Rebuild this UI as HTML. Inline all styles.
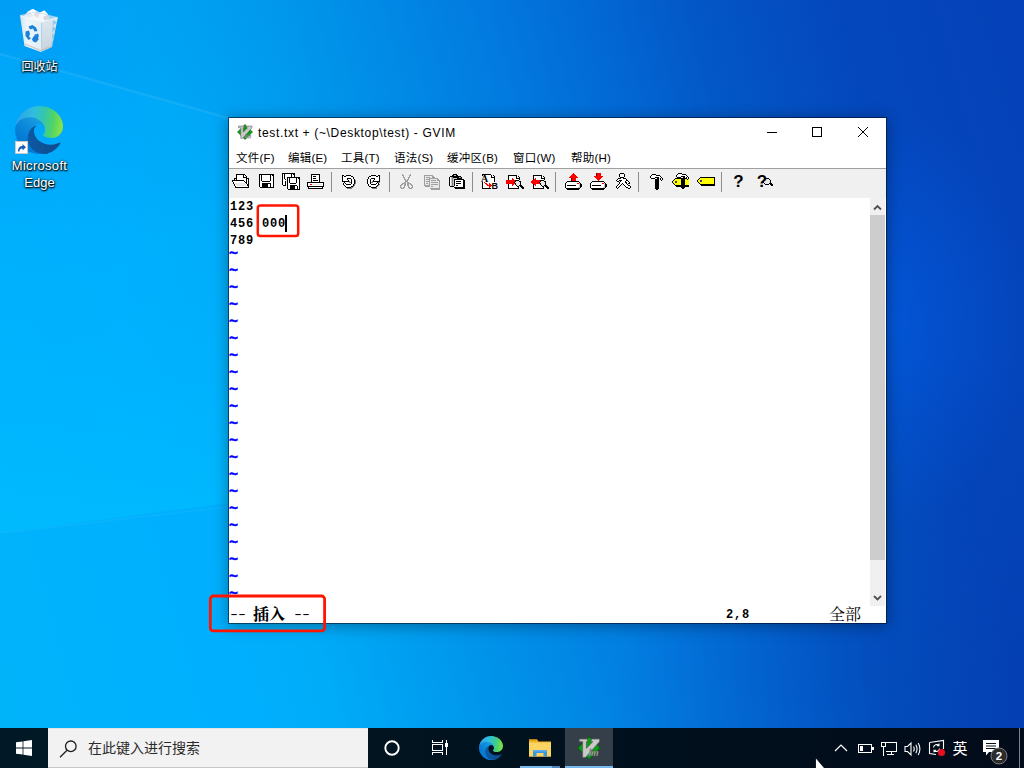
<!DOCTYPE html>
<html lang="zh-CN">
<head>
<meta charset="utf-8">
<title>GVIM</title>
<style>
*{box-sizing:border-box;margin:0;padding:0}
html,body{width:1024px;height:768px;overflow:hidden;background:#0a6fd0}
body{position:relative;font-family:"Liberation Sans","Noto Sans CJK SC",sans-serif;font-size:12px;color:#000}
#desk{position:absolute;left:0;top:0;width:1024px;height:768px;
 background:
  radial-gradient(circle 300px at 0 0, rgba(0,130,230,.40), rgba(0,130,230,0) 100%),
  radial-gradient(circle 420px at 1024px 768px, rgba(4,50,165,.45), rgba(4,50,165,0) 100%),
  radial-gradient(ellipse 150px 210px at 880px 320px, rgba(2,92,228,.65), rgba(2,92,228,0) 100%),
  linear-gradient(75deg,#00b4f9 0%,#00b0ff 20%,#00acf8 28%,#0095eb 41%,#027adf 56%,#0268d4 65%,#0357c6 73%,#0447bc 85%,#0541b8 100%);}
#win{position:absolute;left:228px;top:117px;width:659px;height:507px;background:#fff;background-clip:padding-box;border:1px solid rgba(0,10,30,.55);box-shadow:0 2px 14px rgba(0,0,0,.35)}
#title{position:absolute;left:0;top:0;width:657px;height:30px;background:#fff}
#title .t{position:absolute;left:29px;top:8px;font-size:12px;letter-spacing:.66px;line-height:15px;white-space:nowrap;transform-origin:0 50%}
#menu{position:absolute;left:0;top:30px;width:657px;height:20px;background:#fff}
#menu span{position:absolute;top:2px;line-height:16px;font-size:11.500px;letter-spacing:.2px;white-space:nowrap}
#tb{position:absolute;left:0;top:50px;width:657px;height:30px;background:#f0f0f0;border-top:1px solid #a0a0a0}
#ed{position:absolute;left:0;top:80px;width:657px;height:425px;background:#fff;font-family:"Liberation Mono","Noto Serif CJK SC",monospace;font-weight:bold;font-size:13.33px;line-height:17px;white-space:pre}
#ed .l{position:absolute;left:0;height:17px}
#ed .m{left:.5px;transform:scaleX(.9);transform-origin:0 0;letter-spacing:.89px}
#ed .tl{color:#0000ff;font-size:15px;left:0;-webkit-text-stroke:.5px #00f}
#ed .cj{font-family:"Noto Serif CJK SC",serif;font-size:16px;line-height:17px;display:inline-block;vertical-align:top;height:17px;margin-top:-1px}
#ed .da{display:inline-block;position:relative;left:-1.500px;top:-.5px;font-weight:normal;width:16px;white-space:nowrap;transform:scaleX(1.5);transform-origin:0 50%;letter-spacing:-2.670px}
#sb{position:absolute;left:641px;top:80px;width:15px;height:408px;background:#f0f0f0}
#sb .th{position:absolute;left:0;top:17px;width:15px;height:345px;background:#cdcdcd}
#task{position:absolute;left:0;top:728px;width:1024px;height:40px;background:linear-gradient(90deg,#011926 0%,#01131f 45%,#010f1d 70%,#020b1a 100%)}
#search{position:absolute;left:48px;top:0;width:320px;height:40px;background:#f2f2f2;border-top:1px solid #e4e4e4;border-bottom:1px solid #c8c8c8}
#search .tx{position:absolute;left:40px;top:10px;font-size:14px;line-height:18px;color:#2a2a2a;white-space:nowrap}
#task svg{position:absolute}
.ann{position:absolute;border:2.3px solid #fb1d10;border-radius:4px}
.ico{position:absolute;color:#fff;text-align:center;font-size:12px;line-height:17px;white-space:nowrap;text-shadow:0 1px 2px rgba(0,0,0,.9),0 0 3px rgba(0,0,0,.8),1px 1px 1px rgba(0,0,0,.7)}
.abs{position:absolute}
</style>
</head>
<body>
<div id="desk"></div>
<svg class="abs" style="left:0;top:0" width="1024" height="728" viewBox="0 0 1024 728">
 <defs><linearGradient id="wg" x1="0" y1="120" x2="0" y2="520" gradientUnits="userSpaceOnUse"><stop offset="0" stop-color="#00b0ff" stop-opacity=".3"/><stop offset=".45" stop-color="#00b2ff" stop-opacity=".45"/><stop offset="1" stop-color="#00bcff" stop-opacity=".75"/></linearGradient></defs>
 <path d="M0 54 L228 118 V503 L0 533 Z" fill="url(#wg)"/>
 <path d="M0 54 L228 118" stroke="#5cc8ff" stroke-opacity=".2" stroke-width="2.500" fill="none"/>
 <path d="M0 533 L228 507" stroke="#4fd0ff" stroke-opacity=".13" stroke-width="1.500" fill="none"/>
</svg>

<svg width="0" height="0" style="position:absolute">
 <defs>
  <linearGradient id="eg1" x1="63" y1="0" x2="242" y2="0" gradientUnits="userSpaceOnUse"><stop offset="0" stop-color="#0c59a4"/><stop offset="1" stop-color="#114a8b"/></linearGradient>
  <linearGradient id="eg2" x1="157" y1="100" x2="46" y2="222" gradientUnits="userSpaceOnUse"><stop offset="0" stop-color="#1b9de2"/><stop offset=".16" stop-color="#1595df"/><stop offset=".67" stop-color="#0680d7"/><stop offset="1" stop-color="#0078d4"/></linearGradient>
  <linearGradient id="eg3" x1="10" y1="60" x2="250" y2="90" gradientUnits="userSpaceOnUse"><stop offset="0" stop-color="#2aa3ea"/><stop offset=".35" stop-color="#2fbddf"/><stop offset=".6" stop-color="#35c7a8"/><stop offset=".8" stop-color="#4fd36a"/><stop offset="1" stop-color="#86e247"/></linearGradient>
  <symbol id="edge" viewBox="0 0 256 256">
   <path d="M235.7 195.5a93.7 93.7 0 0 1-10.600 4.700 101.900 101.900 0 0 1-35.900 6.400c-47.300 0-88.500-32.500-88.500-74.300a31.500 31.500 0 0 1 16.400-27.300c-42.800 1.800-53.800 46.400-53.800 72.500 0 73.900 68.100 81.400 82.800 81.400 7.900 0 19.800-2.300 27-4.600l1.300-.4a128.300 128.300 0 0 0 66.600-52.800 4 4 0 0 0-5.300-5.600Z" fill="url(#eg1)"/>
   <path d="M105.700 241.400a79.200 79.200 0 0 1-22.700-21.300 80.700 80.700 0 0 1 29.500-120c3.200-1.500 8.500-4.100 15.600-4a32.400 32.400 0 0 1 25.700 13 31.900 31.900 0 0 1 6.300 18.700c0-.2 24.500-79.600-80-79.600-43.900 0-80 41.600-80 78.200a130.200 130.200 0 0 0 12.100 56 128 128 0 0 0 156.400 67 75.500 75.500 0 0 1-62.800-8Z" fill="url(#eg2)"/>
   <path d="M152.300 148.900c-.9 1-3.300 2.500-3.300 5.700 0 2.600 1.700 5.200 4.800 7.300 14.300 10 41.400 8.600 41.500 8.600a59.600 59.600 0 0 0 30.300-8.300 61.400 61.400 0 0 0 30.400-52.900c.3-22.400-8-37.300-11.300-43.900C223.500 24.100 177.900 0 128 0A128 128 0 0 0 0 126.200c.5-36.500 36.800-66 80-66 3.500 0 23.500.3 42 10a72.600 72.600 0 0 1 30.900 29.300c6.100 10.600 7.200 24.100 7.200 29.500s-2.700 13.300-7.800 19.900Z" fill="url(#eg3)"/>
  </symbol>
  <symbol id="vim" viewBox="0 0 32 32">
   <path d="M16 1 L31 16 L16 31 L1 16 Z" fill="#0a9c16" stroke="#05600b" stroke-width="1.200"/>
   <path d="M3 4 H14 V7.500 H12.500 V16.500 L21 7.500 H19 V4 H30 V7.500 L11.500 28.500 H7.500 V7.500 H3 Z" fill="#c9c9c9" stroke="#5a5a5a" stroke-width="1"/>
   <text x="15.500" y="27" font-family="Liberation Sans,sans-serif" font-weight="bold" font-style="italic" font-size="11" fill="#d4d4d4" stroke="#444" stroke-width=".500">im</text>
  </symbol>
 </defs>
</svg>

<svg class="abs" style="left:16px;top:6px" width="46" height="50" viewBox="0 0 46 50">
 <defs><linearGradient id="rb1" x1="0" y1="0" x2="1" y2="0"><stop offset="0" stop-color="#dfe7ee"/><stop offset=".35" stop-color="#f7f9fb"/><stop offset="1" stop-color="#eef1f4"/></linearGradient>
 <linearGradient id="rb2" x1="0" y1="0" x2="0" y2="1"><stop offset="0" stop-color="#e6ebf0"/><stop offset="1" stop-color="#d0d6dc"/></linearGradient></defs>
 <path d="M4 9.500 L20 6 L41.800 11.500 L25.500 16 Z" fill="#cfe6f6" opacity=".75"/>
 <path d="M8 10 L12 5.500 L17 3 L20.500 5 L24 6.500 L28.500 4.500 L32 8.500 L33.500 12.500 L29 15 L25.500 16 L19 14 L11 12 Z" fill="#f5f6f8"/>
 <path d="M12 5.500 L17 3 L20.500 5 L17.500 9 Z" fill="#ffffff"/><path d="M20.500 5 L24 6.500 L22 12 L17.500 9 Z" fill="#dcdfe4"/><path d="M24 6.500 L28.500 4.500 L32 8.500 L27 11 Z" fill="#fbfbfc"/><path d="M27 11 L32 8.500 L33.500 12.500 L29 15 Z" fill="#d4d8de"/><path d="M8 10 L12 5.500 L17.500 9 L13 12.500 Z" fill="#e6e9ed"/>
 <path d="M4 9.500 L25.500 16 L25 46 L8.500 40 Z" fill="url(#rb1)" opacity=".96"/>
 <path d="M25.500 16 L41.800 11.500 L36 41 L25 46 Z" fill="url(#rb2)" opacity=".96"/>
 <path d="M37 14 l3.800 2.500 -4.300 3 3.500 3.500 -4 3.500 3 3.500 -3.500 3.500 2 3.500 -1.800 3 Z" fill="#5bb5ef" opacity=".6"/>
 <path d="M9 38 L25 44.500 L35.500 40" fill="none" stroke="#bfb7b0" stroke-width="1.200" opacity=".7"/>
 <path d="M4 9.500 L25.500 16 L41.800 11.500" fill="none" stroke="#ffffff" stroke-width=".900" opacity=".9"/>
 <path d="M4 9.500 L20 6 L41.800 11.500" fill="none" stroke="#a9d6f3" stroke-width=".700" opacity=".9"/>
 <g fill="#1b7fdc"><path d="M12.500 20.500 L16.500 19 L20 21.500 L21.500 25 L18.500 25.500 L17 22.500 L14 23.500 Z"/><path d="M9.500 25.500 L13 24.500 L14 28 L13 30.500 L15 32.500 L12.500 34 L9.500 30 Z"/><path d="M16 33 L18 30 L22 29.500 L22.500 33.500 L20 36.500 L17 35.500 Z"/><path d="M18 29 L22 27.500 L23 30.500 L20 31 Z"/></g>
</svg>
<div class="ico" style="left:0;top:59px;width:79px">回收站</div>
<svg class="abs" style="left:15px;top:106px" width="48" height="48"><use href="#edge" width="48" height="48"/></svg>
<svg class="abs" style="left:15px;top:141px" width="13" height="13" viewBox="0 0 13 13"><rect x=".5" y=".5" width="12" height="12" fill="#fff" stroke="#c8c8c8"/><path d="M3 10.500 C3 6.500 5 5 7.500 5 V3 L11 6.200 7.500 9.500 V7.500 C5.500 7.500 4.500 8.500 4.500 10.500 Z" fill="#1a5fb4"/></svg>
<div class="ico" style="left:0;top:157px;width:79px;font-size:13px;letter-spacing:.3px">Microsoft</div>
<div class="ico" style="left:0;top:174px;width:79px;font-size:13px">Edge</div>
<div id="win">
 <div id="title"><svg class="abs" style="left:8px;top:6px" width="16" height="16"><use href="#vim" width="16" height="16"/></svg><div class="t">test.txt + (~\Desktop\test) - GVIM</div>
  <svg style="position:absolute;left:530px;top:0" width="127" height="30" viewBox="0 0 127 30" shape-rendering="crispEdges" fill="none" stroke="#000" stroke-width="1">
   <path d="M8 14.5h10"/><rect x="53.5" y="9.5" width="9" height="9"/><path d="M99 9l10 10M109 9l-10 10" shape-rendering="auto"/>
  </svg>
 </div>
 <div id="menu">
  <span style="left:7px">文件(F)</span><span style="left:59px">编辑(E)</span><span style="left:112px">工具(T)</span><span style="left:165px">语法(S)</span><span style="left:218px">缓冲区(B)</span><span style="left:284px">窗口(W)</span><span style="left:342px">帮助(H)</span>
 </div>
 <div id="tb">
<svg class="abs" style="left:3px;top:5px" width="18" height="14" viewBox="0 0 18 14" shape-rendering="crispEdges"><path fill="#000" d="M4 0h9v1h-9zM4 1h1v1h-1zM11 1h1v1h-1zM13 1h1v1h-1zM4 2h1v1h-1zM11 2h1v1h-1zM14 2h1v1h-1zM4 3h1v1h-1zM11 3h4v1h-4zM2 4h3v1h-3zM14 4h3v1h-3zM2 5h1v1h-1zM4 5h1v1h-1zM14 5h1v1h-1zM16 5h1v1h-1zM0 6h12v1h-12zM14 6h1v1h-1zM16 6h1v1h-1zM0 7h1v1h-1zM12 7h1v1h-1zM14 7h1v1h-1zM16 7h1v1h-1zM1 8h1v1h-1zM13 8h2v1h-2zM16 8h1v1h-1zM1 9h1v1h-1zM14 9h1v1h-1zM16 9h1v1h-1zM2 10h1v1h-1zM15 10h2v1h-2zM2 11h1v1h-1zM15 11h2v1h-2zM3 12h1v1h-1zM16 12h1v1h-1zM3 13h14v1h-14z"/><path fill="#fff" d="M5 1h6v1h-6zM12 1h1v1h-1zM5 2h6v1h-6zM12 2h2v1h-2zM5 3h6v1h-6zM5 4h9v1h-9zM3 5h1v1h-1zM5 5h9v1h-9zM15 5h1v1h-1zM12 6h2v1h-2zM15 6h1v1h-1zM1 7h11v1h-11zM13 7h1v1h-1zM15 7h1v1h-1zM2 8h11v1h-11zM15 8h1v1h-1zM2 9h1v1h-1zM13 9h1v1h-1zM15 9h1v1h-1zM3 10h1v1h-1zM14 10h1v1h-1zM3 11h1v1h-1zM14 11h1v1h-1zM4 12h12v1h-12z"/><path fill="#e8e8e8" d="M3 9h10v1h-10zM4 10h10v1h-10zM4 11h10v1h-10z"/></svg>
<svg class="abs" style="left:30px;top:5px" width="15" height="14" viewBox="0 0 15 14" shape-rendering="crispEdges"><path fill="#000" d="M0 0h15v1h-15zM0 1h1v1h-1zM2 1h1v1h-1zM11 1h1v1h-1zM13 1h2v1h-2zM0 2h1v1h-1zM2 2h1v1h-1zM11 2h1v1h-1zM14 2h1v1h-1zM0 3h1v1h-1zM2 3h1v1h-1zM11 3h1v1h-1zM14 3h1v1h-1zM0 4h1v1h-1zM2 4h1v1h-1zM11 4h1v1h-1zM14 4h1v1h-1zM0 5h1v1h-1zM2 5h1v1h-1zM11 5h1v1h-1zM14 5h1v1h-1zM0 6h1v1h-1zM2 6h1v1h-1zM11 6h1v1h-1zM14 6h1v1h-1zM0 7h1v1h-1zM3 7h8v1h-8zM14 7h1v1h-1zM0 8h1v1h-1zM14 8h1v1h-1zM0 9h1v1h-1zM3 9h9v1h-9zM14 9h1v1h-1zM0 10h1v1h-1zM3 10h6v1h-6zM11 10h1v1h-1zM14 10h1v1h-1zM0 11h1v1h-1zM3 11h6v1h-6zM11 11h1v1h-1zM14 11h1v1h-1zM0 12h1v1h-1zM3 12h6v1h-6zM11 12h1v1h-1zM14 12h1v1h-1zM1 13h14v1h-14z"/><path fill="#fff" d="M1 1h1v1h-1zM3 1h8v1h-8zM12 1h1v1h-1zM1 2h1v1h-1zM3 2h8v1h-8zM12 2h2v1h-2zM1 3h1v1h-1zM3 3h8v1h-8zM12 3h2v1h-2zM1 4h1v1h-1zM3 4h8v1h-8zM12 4h2v1h-2zM1 5h1v1h-1zM3 5h8v1h-8zM12 5h2v1h-2zM1 6h1v1h-1zM3 6h8v1h-8zM12 6h2v1h-2zM1 7h2v1h-2zM11 7h3v1h-3zM1 8h13v1h-13zM1 9h2v1h-2zM12 9h2v1h-2zM1 10h2v1h-2zM9 10h2v1h-2zM12 10h2v1h-2zM1 11h2v1h-2zM9 11h2v1h-2zM12 11h2v1h-2zM1 12h2v1h-2zM9 12h2v1h-2zM12 12h2v1h-2z"/></svg>
<svg class="abs" style="left:53px;top:4px" width="18" height="17" viewBox="0 0 18 17" shape-rendering="crispEdges"><path fill="#000" d="M0 0h13v1h-13zM0 1h1v1h-1zM2 1h1v1h-1zM9 1h1v1h-1zM11 1h2v1h-2zM0 2h1v1h-1zM2 2h1v1h-1zM9 2h1v1h-1zM12 2h1v1h-1zM0 3h1v1h-1zM2 3h1v1h-1zM9 3h1v1h-1zM12 3h1v1h-1zM0 4h1v1h-1zM2 4h1v1h-1zM5 4h13v1h-13zM0 5h1v1h-1zM2 5h1v1h-1zM5 5h1v1h-1zM7 5h1v1h-1zM14 5h1v1h-1zM16 5h2v1h-2zM0 6h1v1h-1zM3 6h1v1h-1zM5 6h1v1h-1zM7 6h1v1h-1zM14 6h1v1h-1zM17 6h1v1h-1zM0 7h1v1h-1zM5 7h1v1h-1zM7 7h1v1h-1zM14 7h1v1h-1zM17 7h1v1h-1zM0 8h1v1h-1zM3 8h1v1h-1zM5 8h1v1h-1zM7 8h1v1h-1zM14 8h1v1h-1zM17 8h1v1h-1zM0 9h1v1h-1zM3 9h1v1h-1zM5 9h1v1h-1zM7 9h1v1h-1zM14 9h1v1h-1zM17 9h1v1h-1zM0 10h1v1h-1zM3 10h1v1h-1zM5 10h1v1h-1zM8 10h6v1h-6zM17 10h1v1h-1zM0 11h1v1h-1zM3 11h1v1h-1zM5 11h1v1h-1zM17 11h1v1h-1zM1 12h3v1h-3zM5 12h1v1h-1zM8 12h7v1h-7zM17 12h1v1h-1zM5 13h1v1h-1zM8 13h5v1h-5zM15 13h1v1h-1zM17 13h1v1h-1zM5 14h1v1h-1zM8 14h5v1h-5zM15 14h1v1h-1zM17 14h1v1h-1zM5 15h1v1h-1zM8 15h5v1h-5zM15 15h1v1h-1zM17 15h1v1h-1zM6 16h12v1h-12z"/><path fill="#fff" d="M1 1h1v1h-1zM3 1h6v1h-6zM10 1h1v1h-1zM1 2h1v1h-1zM3 2h6v1h-6zM10 2h2v1h-2zM1 3h1v1h-1zM3 3h6v1h-6zM10 3h2v1h-2zM1 4h1v1h-1zM3 4h1v1h-1zM1 5h1v1h-1zM3 5h1v1h-1zM6 5h1v1h-1zM8 5h6v1h-6zM15 5h1v1h-1zM1 6h2v1h-2zM6 6h1v1h-1zM8 6h6v1h-6zM15 6h2v1h-2zM1 7h3v1h-3zM6 7h1v1h-1zM8 7h6v1h-6zM15 7h2v1h-2zM1 8h2v1h-2zM6 8h1v1h-1zM8 8h6v1h-6zM15 8h2v1h-2zM1 9h2v1h-2zM6 9h1v1h-1zM8 9h6v1h-6zM15 9h2v1h-2zM1 10h2v1h-2zM6 10h2v1h-2zM14 10h3v1h-3zM1 11h2v1h-2zM6 11h11v1h-11zM6 12h2v1h-2zM15 12h2v1h-2zM6 13h2v1h-2zM13 13h2v1h-2zM16 13h1v1h-1zM6 14h2v1h-2zM13 14h2v1h-2zM16 14h1v1h-1zM6 15h2v1h-2zM13 15h2v1h-2zM16 15h1v1h-1z"/></svg>
<svg class="abs" style="left:78px;top:5px" width="17" height="15" viewBox="0 0 17 15" shape-rendering="crispEdges"><path fill="#000" d="M4 0h9v1h-9zM4 1h1v1h-1zM12 1h1v1h-1zM4 2h1v1h-1zM6 2h3v1h-3zM12 2h1v1h-1zM4 3h1v1h-1zM12 3h1v1h-1zM4 4h1v1h-1zM6 4h3v1h-3zM12 4h1v1h-1zM4 5h1v1h-1zM12 5h1v1h-1zM4 6h1v1h-1zM6 6h5v1h-5zM12 6h1v1h-1zM4 7h1v1h-1zM12 7h1v1h-1zM0 8h17v1h-17zM0 9h1v1h-1zM16 9h1v1h-1zM0 10h1v1h-1zM16 10h1v1h-1zM0 11h1v1h-1zM16 11h1v1h-1zM0 12h17v1h-17zM1 13h1v1h-1zM15 13h1v1h-1zM1 14h15v1h-15z"/><path fill="#fff" d="M5 1h7v1h-7zM5 2h1v1h-1zM9 2h3v1h-3zM5 3h7v1h-7zM5 4h1v1h-1zM9 4h3v1h-3zM5 5h7v1h-7zM5 6h1v1h-1zM11 6h1v1h-1zM5 7h7v1h-7zM1 9h15v1h-15zM1 10h2v1h-2zM15 10h1v1h-1zM1 11h15v1h-15zM2 13h13v1h-13z"/><path fill="#f00" d="M3 10h2v1h-2z"/><path fill="#e8e8e8" d="M5 10h10v1h-10z"/></svg>
<svg class="abs" style="left:113px;top:6px" width="14" height="14" viewBox="0 0 14 14" shape-rendering="crispEdges"><path fill="#000" d="M0 0h2v1h-2zM4 0h5v1h-5zM0 1h1v1h-1zM2 1h2v1h-2zM9 1h2v1h-2zM0 2h1v1h-1zM11 2h1v1h-1zM0 3h1v1h-1zM5 3h4v1h-4zM11 3h1v1h-1zM0 4h1v1h-1zM5 4h1v1h-1zM9 4h1v1h-1zM12 4h1v1h-1zM0 5h1v1h-1zM6 5h1v1h-1zM9 5h1v1h-1zM12 5h1v1h-1zM0 6h7v1h-7zM9 6h1v1h-1zM12 6h1v1h-1zM2 7h1v1h-1zM9 7h1v1h-1zM12 7h1v1h-1zM1 8h1v1h-1zM3 8h1v1h-1zM9 8h1v1h-1zM12 8h1v1h-1zM1 9h1v1h-1zM4 9h5v1h-5zM11 9h1v1h-1zM2 10h1v1h-1zM11 10h1v1h-1zM3 11h1v1h-1zM9 11h2v1h-2zM4 12h5v1h-5z"/><path fill="#fff" d="M1 1h1v1h-1zM4 1h5v1h-5zM1 2h10v1h-10zM1 3h4v1h-4zM9 3h2v1h-2zM1 4h4v1h-4zM6 4h3v1h-3zM10 4h2v1h-2zM1 5h5v1h-5zM7 5h2v1h-2zM10 5h2v1h-2zM8 6h1v1h-1zM10 6h2v1h-2zM3 7h4v1h-4zM10 7h2v1h-2zM2 8h1v1h-1zM4 8h5v1h-5zM10 8h2v1h-2zM2 9h2v1h-2zM9 9h2v1h-2zM3 10h8v1h-8zM4 11h5v1h-5z"/><path fill="#808080" d="M13 5h1v1h-1zM7 6h1v1h-1zM13 6h1v1h-1zM7 7h2v1h-2zM13 7h1v1h-1zM13 8h1v1h-1zM12 9h1v1h-1zM12 10h1v1h-1zM11 11h1v1h-1zM9 12h2v1h-2zM5 13h5v1h-5z"/></svg>
<svg class="abs" style="left:137px;top:6px" width="14" height="14" viewBox="0 0 14 14" shape-rendering="crispEdges"><path fill="#000" d="M5 0h5v1h-5zM12 0h2v1h-2zM3 1h2v1h-2zM10 1h2v1h-2zM13 1h1v1h-1zM2 2h1v1h-1zM13 2h1v1h-1zM2 3h1v1h-1zM5 3h4v1h-4zM13 3h1v1h-1zM1 4h1v1h-1zM4 4h1v1h-1zM8 4h1v1h-1zM13 4h1v1h-1zM1 5h1v1h-1zM4 5h1v1h-1zM7 5h1v1h-1zM13 5h1v1h-1zM1 6h1v1h-1zM4 6h1v1h-1zM7 6h7v1h-7zM1 7h1v1h-1zM4 7h1v1h-1zM11 7h1v1h-1zM1 8h1v1h-1zM4 8h1v1h-1zM10 8h1v1h-1zM12 8h1v1h-1zM2 9h1v1h-1zM5 9h5v1h-5zM12 9h1v1h-1zM2 10h1v1h-1zM11 10h1v1h-1zM3 11h2v1h-2zM10 11h1v1h-1zM5 12h5v1h-5z"/><path fill="#fff" d="M5 1h5v1h-5zM12 1h1v1h-1zM3 2h10v1h-10zM3 3h2v1h-2zM9 3h4v1h-4zM2 4h2v1h-2zM5 4h3v1h-3zM9 4h4v1h-4zM2 5h2v1h-2zM5 5h2v1h-2zM8 5h5v1h-5zM2 6h2v1h-2zM5 6h1v1h-1zM2 7h2v1h-2zM7 7h4v1h-4zM2 8h2v1h-2zM5 8h5v1h-5zM11 8h1v1h-1zM3 9h2v1h-2zM10 9h2v1h-2zM3 10h8v1h-8zM5 11h5v1h-5z"/><path fill="#808080" d="M6 6h1v1h-1zM5 7h2v1h-2zM12 7h2v1h-2zM13 9h1v1h-1zM12 10h1v1h-1zM11 11h1v1h-1zM10 12h1v1h-1zM6 13h5v1h-5z"/></svg>
<svg class="abs" style="left:171px;top:5px" width="13" height="15" viewBox="0 0 13 15" shape-rendering="crispEdges"><path fill="#a0a0a0" d="M2 0h1v1h-1zM10 0h1v1h-1zM2 1h2v1h-2zM9 1h2v1h-2zM3 2h1v1h-1zM9 2h1v1h-1zM3 3h2v1h-2zM8 3h2v1h-2zM4 4h1v1h-1zM8 4h1v1h-1zM4 5h2v1h-2zM7 5h2v1h-2zM5 6h3v1h-3zM5 7h3v1h-3zM4 8h2v1h-2zM7 8h2v1h-2zM2 9h4v1h-4zM7 9h4v1h-4zM1 10h2v1h-2zM4 10h2v1h-2zM7 10h2v1h-2zM10 10h2v1h-2zM0 11h2v1h-2zM4 11h2v1h-2zM7 11h2v1h-2zM11 11h2v1h-2zM0 12h1v1h-1zM4 12h1v1h-1zM8 12h1v1h-1zM12 12h1v1h-1zM0 13h2v1h-2zM3 13h2v1h-2zM8 13h2v1h-2zM11 13h2v1h-2zM1 14h3v1h-3zM9 14h3v1h-3z"/></svg>
<svg class="abs" style="left:195px;top:6px" width="16" height="15" viewBox="0 0 16 15" shape-rendering="crispEdges"><path fill="#a0a0a0" d="M0 0h9v1h-9zM0 1h1v1h-1zM8 1h2v1h-2zM0 2h1v1h-1zM2 2h4v1h-4zM8 2h3v1h-3zM0 3h1v1h-1zM5 3h9v1h-9zM0 4h1v1h-1zM2 4h4v1h-4zM13 4h2v1h-2zM0 5h1v1h-1zM5 5h1v1h-1zM7 5h5v1h-5zM13 5h3v1h-3zM0 6h1v1h-1zM2 6h4v1h-4zM15 6h1v1h-1zM0 7h1v1h-1zM5 7h1v1h-1zM7 7h7v1h-7zM15 7h1v1h-1zM0 8h1v1h-1zM2 8h2v1h-2zM5 8h1v1h-1zM15 8h1v1h-1zM0 9h1v1h-1zM5 9h1v1h-1zM7 9h7v1h-7zM15 9h1v1h-1zM0 10h6v1h-6zM15 10h1v1h-1zM1 11h5v1h-5zM7 11h2v1h-2zM15 11h1v1h-1zM15 12h1v1h-1zM6 13h10v1h-10zM7 14h9v1h-9z"/><path fill="#e8e8e8" d="M1 1h7v1h-7zM1 2h1v1h-1zM6 2h2v1h-2zM1 3h4v1h-4zM1 4h1v1h-1zM6 4h7v1h-7zM1 5h4v1h-4zM6 5h1v1h-1zM12 5h1v1h-1zM1 6h1v1h-1zM6 6h9v1h-9zM1 7h4v1h-4zM6 7h1v1h-1zM14 7h1v1h-1zM1 8h1v1h-1zM4 8h1v1h-1zM6 8h9v1h-9zM1 9h4v1h-4zM6 9h1v1h-1zM14 9h1v1h-1zM6 10h9v1h-9zM6 11h1v1h-1zM9 11h6v1h-6zM6 12h9v1h-9z"/></svg>
<svg class="abs" style="left:220px;top:5px" width="16" height="15" viewBox="0 0 16 15" shape-rendering="crispEdges"><path fill="#000" d="M4 0h4v1h-4zM3 1h2v1h-2zM7 1h2v1h-2zM1 2h11v1h-11zM0 3h1v1h-1zM4 3h6v1h-6zM12 3h1v1h-1zM0 4h1v1h-1zM8 4h5v1h-5zM0 5h1v1h-1zM5 5h10v1h-10zM0 6h1v1h-1zM5 6h1v1h-1zM14 6h2v1h-2zM0 7h1v1h-1zM5 7h1v1h-1zM7 7h5v1h-5zM14 7h2v1h-2zM0 8h1v1h-1zM5 8h1v1h-1zM14 8h2v1h-2zM0 9h1v1h-1zM5 9h1v1h-1zM7 9h5v1h-5zM14 9h2v1h-2zM0 10h1v1h-1zM5 10h1v1h-1zM14 10h2v1h-2zM0 11h1v1h-1zM5 11h1v1h-1zM7 11h2v1h-2zM14 11h2v1h-2zM1 12h4v1h-4zM14 12h2v1h-2zM5 13h11v1h-11zM6 14h10v1h-10z"/><path fill="#c6c6c6" d="M5 1h2v1h-2zM2 3h1v1h-1zM10 3h1v1h-1zM2 4h1v1h-1zM4 4h4v1h-4zM2 5h1v1h-1zM4 5h1v1h-1zM2 6h1v1h-1zM4 6h1v1h-1zM2 7h1v1h-1zM4 7h1v1h-1zM2 8h1v1h-1zM4 8h1v1h-1zM2 9h1v1h-1zM4 9h1v1h-1zM2 10h1v1h-1zM4 10h1v1h-1zM2 11h1v1h-1zM4 11h1v1h-1z"/><path fill="#fff" d="M1 3h1v1h-1zM1 4h1v1h-1zM1 5h1v1h-1zM1 6h1v1h-1zM6 6h8v1h-8zM1 7h1v1h-1zM6 7h1v1h-1zM12 7h2v1h-2zM1 8h1v1h-1zM6 8h8v1h-8zM1 9h1v1h-1zM6 9h1v1h-1zM12 9h2v1h-2zM1 10h1v1h-1zM6 10h8v1h-8zM1 11h1v1h-1zM6 11h1v1h-1zM9 11h5v1h-5zM5 12h9v1h-9z"/><path fill="#808080" d="M3 3h1v1h-1zM11 3h1v1h-1zM3 4h1v1h-1zM3 5h1v1h-1zM3 6h1v1h-1zM3 7h1v1h-1zM3 8h1v1h-1zM3 9h1v1h-1zM3 10h1v1h-1zM3 11h1v1h-1z"/></svg>
<svg class="abs" style="left:252px;top:5px" width="17" height="15" viewBox="0 0 17 15" shape-rendering="crispEdges"><path fill="#000" d="M1 0h9v1h-9zM1 1h1v1h-1zM10 1h1v1h-1zM12 1h1v1h-1zM10 2h1v1h-1zM13 2h1v1h-1zM10 3h4v1h-4zM13 4h1v1h-1zM13 5h1v1h-1zM13 6h1v1h-1zM13 7h1v1h-1zM1 8h1v1h-1zM1 9h1v1h-1zM1 10h1v1h-1zM1 11h1v1h-1zM1 12h1v1h-1zM1 13h1v1h-1zM1 14h9v1h-9z"/><path fill="#fff" d="M2 1h8v1h-8zM11 1h1v1h-1zM2 2h8v1h-8zM11 2h2v1h-2zM2 3h8v1h-8zM2 4h11v1h-11zM2 5h11v1h-11zM2 6h11v1h-11zM2 7h11v1h-11zM2 8h1v1h-1zM4 8h9v1h-9zM2 9h2v1h-2zM6 9h2v1h-2zM9 9h4v1h-4zM2 10h3v1h-3zM7 10h1v1h-1zM10 10h3v1h-3zM2 11h4v1h-4zM11 11h2v1h-2zM2 12h6v1h-6zM10 12h3v1h-3zM2 13h6v1h-6zM9 13h4v1h-4z"/><path fill="#f00" d="M3 8h1v1h-1zM4 9h2v1h-2zM8 9h1v1h-1zM5 10h2v1h-2zM8 10h2v1h-2zM6 11h5v1h-5zM8 12h2v1h-2zM8 13h1v1h-1z"/><text x="0" y="8" font-family="Liberation Serif,serif" font-weight="bold" font-size="10" style="shape-rendering:auto">A</text><text x="10.500" y="15" font-family="Liberation Sans,sans-serif" font-weight="bold" font-size="9">B</text></svg>
<svg class="abs" style="left:277px;top:6px" width="18" height="14" viewBox="0 0 18 14" shape-rendering="crispEdges"><path fill="#000" d="M2 0h9v1h-9zM2 1h1v1h-1zM10 1h1v1h-1zM12 1h1v1h-1zM2 2h1v1h-1zM10 2h1v1h-1zM13 2h1v1h-1zM2 3h1v1h-1zM10 3h4v1h-4zM2 4h1v1h-1zM13 4h1v1h-1zM9 5h4v1h-4zM9 6h1v1h-1zM13 6h2v1h-2zM8 7h1v1h-1zM14 7h1v1h-1zM9 8h1v1h-1zM14 8h1v1h-1zM2 9h1v1h-1zM9 9h1v1h-1zM14 9h1v1h-1zM2 10h1v1h-1zM10 10h1v1h-1zM13 10h3v1h-3zM2 11h1v1h-1zM11 11h2v1h-2zM14 11h3v1h-3zM2 12h1v1h-1zM12 12h1v1h-1zM15 12h3v1h-3zM2 13h11v1h-11zM16 13h2v1h-2z"/><path fill="#fff" d="M3 1h7v1h-7zM11 1h1v1h-1zM3 2h7v1h-7zM11 2h2v1h-2zM3 3h3v1h-3zM7 3h3v1h-3zM3 4h3v1h-3zM8 4h5v1h-5zM3 9h3v1h-3zM8 9h1v1h-1zM3 10h3v1h-3zM7 10h3v1h-3zM3 11h8v1h-8zM3 12h9v1h-9z"/><path fill="#f00" d="M6 3h1v1h-1zM6 4h2v1h-2zM0 5h9v1h-9zM0 6h9v1h-9zM0 7h8v1h-8zM0 8h9v1h-9zM6 9h2v1h-2zM6 10h1v1h-1z"/><path fill="#e8e8e8" d="M10 6h3v1h-3zM9 7h5v1h-5zM10 8h4v1h-4zM10 9h4v1h-4zM11 10h2v1h-2z"/></svg>
<svg class="abs" style="left:302px;top:6px" width="18" height="14" viewBox="0 0 18 14" shape-rendering="crispEdges"><path fill="#000" d="M2 0h9v1h-9zM2 1h1v1h-1zM10 1h1v1h-1zM12 1h1v1h-1zM2 2h1v1h-1zM10 2h1v1h-1zM13 2h1v1h-1zM2 3h1v1h-1zM10 3h4v1h-4zM2 4h1v1h-1zM13 4h1v1h-1zM9 5h4v1h-4zM9 6h1v1h-1zM13 6h2v1h-2zM8 7h1v1h-1zM14 7h1v1h-1zM9 8h1v1h-1zM14 8h1v1h-1zM2 9h1v1h-1zM9 9h1v1h-1zM14 9h1v1h-1zM2 10h1v1h-1zM10 10h1v1h-1zM13 10h3v1h-3zM2 11h1v1h-1zM11 11h2v1h-2zM14 11h3v1h-3zM2 12h1v1h-1zM12 12h1v1h-1zM15 12h3v1h-3zM2 13h11v1h-11zM16 13h2v1h-2z"/><path fill="#fff" d="M3 1h7v1h-7zM11 1h1v1h-1zM3 2h7v1h-7zM11 2h2v1h-2zM3 3h1v1h-1zM5 3h5v1h-5zM5 4h8v1h-8zM5 9h4v1h-4zM3 10h1v1h-1zM5 10h5v1h-5zM3 11h8v1h-8zM3 12h9v1h-9z"/><path fill="#f00" d="M4 3h1v1h-1zM3 4h2v1h-2zM1 5h8v1h-8zM0 6h9v1h-9zM0 7h8v1h-8zM1 8h8v1h-8zM3 9h2v1h-2zM4 10h1v1h-1z"/><path fill="#e8e8e8" d="M10 6h3v1h-3zM9 7h5v1h-5zM10 8h4v1h-4zM10 9h4v1h-4zM11 10h2v1h-2z"/></svg>
<svg class="abs" style="left:336px;top:4px" width="17" height="17" viewBox="0 0 17 17" shape-rendering="crispEdges"><path fill="#f00" d="M8 0h1v1h-1zM7 1h3v1h-3zM6 2h5v1h-5zM5 3h7v1h-7zM4 4h9v1h-9zM7 5h4v1h-4zM7 6h4v1h-4zM7 7h4v1h-4zM12 10h2v1h-2z"/><path fill="#600" d="M6 5h1v1h-1zM6 6h1v1h-1zM6 7h1v1h-1z"/><path fill="#000" d="M2 8h12v1h-12zM1 9h1v1h-1zM14 9h1v1h-1zM0 10h1v1h-1zM15 10h1v1h-1zM0 11h1v1h-1zM15 11h2v1h-2zM0 12h1v1h-1zM2 12h9v1h-9zM15 12h2v1h-2zM0 13h1v1h-1zM15 13h2v1h-2zM0 14h1v1h-1zM15 14h1v1h-1zM1 15h14v1h-14zM2 16h12v1h-12z"/><path fill="#fff" d="M2 9h12v1h-12zM1 10h11v1h-11zM1 11h13v1h-13zM1 12h1v1h-1zM11 12h3v1h-3zM1 13h13v1h-13zM1 14h12v1h-12z"/><path fill="#c6c6c6" d="M14 10h1v1h-1zM14 11h1v1h-1zM14 12h1v1h-1zM14 13h1v1h-1zM13 14h2v1h-2z"/></svg>
<svg class="abs" style="left:361px;top:4px" width="17" height="17" viewBox="0 0 17 17" shape-rendering="crispEdges"><path fill="#600" d="M6 0h1v1h-1zM6 1h1v1h-1zM6 2h1v1h-1z"/><path fill="#f00" d="M7 0h4v1h-4zM7 1h4v1h-4zM7 2h4v1h-4zM4 3h9v1h-9zM5 4h7v1h-7zM6 5h5v1h-5zM7 6h3v1h-3zM8 7h1v1h-1zM12 10h2v1h-2z"/><path fill="#000" d="M2 8h12v1h-12zM1 9h1v1h-1zM14 9h1v1h-1zM0 10h1v1h-1zM15 10h1v1h-1zM0 11h1v1h-1zM15 11h2v1h-2zM0 12h1v1h-1zM2 12h9v1h-9zM15 12h2v1h-2zM0 13h1v1h-1zM15 13h2v1h-2zM0 14h1v1h-1zM15 14h1v1h-1zM1 15h14v1h-14zM2 16h12v1h-12z"/><path fill="#fff" d="M2 9h12v1h-12zM1 10h11v1h-11zM1 11h13v1h-13zM1 12h1v1h-1zM11 12h3v1h-3zM1 13h13v1h-13zM1 14h12v1h-12z"/><path fill="#c6c6c6" d="M14 10h1v1h-1zM14 11h1v1h-1zM14 12h1v1h-1zM14 13h1v1h-1zM13 14h2v1h-2z"/></svg>
<svg class="abs" style="left:387px;top:4px" width="15" height="16" viewBox="0 0 15 16" shape-rendering="crispEdges"><path fill="#000" d="M4 0h4v1h-4zM3 1h1v1h-1zM8 1h1v1h-1zM3 2h1v1h-1zM8 2h1v1h-1zM3 3h1v1h-1zM8 3h1v1h-1zM4 4h4v1h-4zM2 5h3v1h-3zM7 5h3v1h-3zM1 6h1v1h-1zM10 6h1v1h-1zM0 7h1v1h-1zM3 7h3v1h-3zM10 7h2v1h-2zM1 8h2v1h-2zM4 8h1v1h-1zM9 8h1v1h-1zM12 8h1v1h-1zM3 9h1v1h-1zM9 9h2v1h-2zM13 9h1v1h-1zM3 10h1v1h-1zM6 10h1v1h-1zM10 10h1v1h-1zM12 10h2v1h-2zM2 11h1v1h-1zM5 11h1v1h-1zM7 11h1v1h-1zM11 11h1v1h-1zM1 12h1v1h-1zM4 12h1v1h-1zM8 12h1v1h-1zM12 12h2v1h-2zM0 13h1v1h-1zM3 13h1v1h-1zM9 13h1v1h-1zM14 13h1v1h-1zM0 14h1v1h-1zM2 14h1v1h-1zM10 14h2v1h-2zM14 14h1v1h-1zM1 15h1v1h-1zM12 15h2v1h-2z"/><path fill="#fff" d="M4 1h4v1h-4zM4 2h4v1h-4zM4 3h4v1h-4zM5 5h2v1h-2zM2 6h8v1h-8zM1 7h2v1h-2zM6 7h4v1h-4zM5 8h4v1h-4zM10 8h2v1h-2zM4 9h5v1h-5zM11 9h2v1h-2zM4 10h2v1h-2zM7 10h3v1h-3zM3 11h2v1h-2zM8 11h3v1h-3zM2 12h2v1h-2zM9 12h3v1h-3zM1 13h2v1h-2zM10 13h4v1h-4zM1 14h1v1h-1zM12 14h2v1h-2z"/></svg>
<svg class="abs" style="left:421px;top:5px" width="13" height="16" viewBox="0 0 13 16" shape-rendering="crispEdges"><path fill="#000" d="M2 0h4v1h-4zM1 1h1v1h-1zM6 1h4v1h-4zM0 2h1v1h-1zM10 2h1v1h-1zM0 3h1v1h-1zM5 3h4v1h-4zM11 3h1v1h-1zM1 4h4v1h-4zM7 4h2v1h-2zM10 4h1v1h-1zM12 4h1v1h-1zM5 5h4v1h-4zM10 5h1v1h-1zM12 5h1v1h-1zM5 6h4v1h-4zM11 6h1v1h-1zM5 7h4v1h-4zM5 8h4v1h-4zM5 9h4v1h-4zM5 10h4v1h-4zM5 11h4v1h-4zM5 12h4v1h-4zM5 13h4v1h-4zM5 14h4v1h-4zM6 15h2v1h-2z"/><path fill="#fff" d="M2 1h4v1h-4zM1 2h9v1h-9zM1 3h4v1h-4zM9 3h2v1h-2zM11 4h1v1h-1zM11 5h1v1h-1z"/></svg>
<svg class="abs" style="left:443px;top:4px" width="18" height="17" viewBox="0 0 18 17" shape-rendering="crispEdges"><path fill="#000" d="M6 0h4v1h-4zM5 1h1v1h-1zM10 1h4v1h-4zM4 2h1v1h-1zM14 2h1v1h-1zM4 3h1v1h-1zM9 3h4v1h-4zM15 3h1v1h-1zM5 4h4v1h-4zM11 4h2v1h-2zM14 4h1v1h-1zM16 4h1v1h-1zM3 5h12v1h-12zM16 5h1v1h-1zM2 6h1v1h-1zM9 6h4v1h-4zM15 6h1v1h-1zM1 7h1v1h-1zM9 7h4v1h-4zM0 8h1v1h-1zM9 8h4v1h-4zM0 9h1v1h-1zM9 9h4v1h-4zM1 10h1v1h-1zM9 10h4v1h-4zM2 11h1v1h-1zM9 11h4v1h-4zM3 12h14v1h-14zM4 13h13v1h-13zM9 14h4v1h-4zM10 15h2v1h-2z"/><path fill="#fff" d="M6 1h4v1h-4zM5 2h9v1h-9zM5 3h4v1h-4zM13 3h2v1h-2zM15 4h1v1h-1zM15 5h1v1h-1z"/><path fill="#ff0" d="M3 6h6v1h-6zM13 6h2v1h-2zM16 6h1v1h-1zM2 7h7v1h-7zM13 7h4v1h-4zM1 8h2v1h-2zM5 8h4v1h-4zM13 8h4v1h-4zM1 9h2v1h-2zM5 9h4v1h-4zM13 9h4v1h-4zM2 10h7v1h-7zM13 10h4v1h-4zM3 11h6v1h-6zM13 11h4v1h-4z"/><path fill="#404080" d="M3 8h2v1h-2zM3 9h2v1h-2z"/></svg>
<svg class="abs" style="left:468px;top:8px" width="18" height="9" viewBox="0 0 18 9" shape-rendering="crispEdges"><path fill="#000" d="M3 0h15v1h-15zM2 1h1v1h-1zM17 1h1v1h-1zM1 2h1v1h-1zM17 2h1v1h-1zM0 3h1v1h-1zM17 3h1v1h-1zM0 4h1v1h-1zM17 4h1v1h-1zM1 5h1v1h-1zM17 5h1v1h-1zM2 6h1v1h-1zM17 6h1v1h-1zM3 7h15v1h-15zM4 8h14v1h-14z"/><path fill="#ff0" d="M3 1h14v1h-14zM2 2h15v1h-15zM1 3h2v1h-2zM5 3h12v1h-12zM1 4h2v1h-2zM5 4h12v1h-12zM2 5h15v1h-15zM3 6h14v1h-14z"/><path fill="#404080" d="M3 3h2v1h-2zM3 4h2v1h-2z"/></svg>
<svg class="abs" style="left:504px;top:5px" width="11" height="15" viewBox="0 0 11 15" shape-rendering="crispEdges"><text x="5.500" y="13" text-anchor="middle" font-family="Liberation Sans,sans-serif" font-weight="bold" font-size="17">?</text></svg>
<svg class="abs" style="left:528px;top:5px" width="16" height="15" viewBox="0 0 16 15" shape-rendering="crispEdges"><path fill="#000" d="M8 4h4v1h-4zM7 5h1v1h-1zM12 5h1v1h-1zM6 6h1v1h-1zM13 6h1v1h-1zM6 7h1v1h-1zM13 7h1v1h-1zM6 8h1v1h-1zM13 8h1v1h-1zM7 9h1v1h-1zM12 9h3v1h-3zM8 10h4v1h-4zM13 10h3v1h-3zM14 11h2v1h-2z"/><path fill="#e8e8e8" d="M8 5h4v1h-4zM7 6h6v1h-6zM7 7h6v1h-6zM7 8h6v1h-6zM8 9h4v1h-4z"/><text x="5" y="13" text-anchor="middle" font-family="Liberation Sans,sans-serif" font-weight="bold" font-size="17">?</text></svg>
<div class="abs" style="left:102px;top:3px;width:1px;height:20px;background:#8c8c8c"></div>
<div class="abs" style="left:160px;top:3px;width:1px;height:20px;background:#8c8c8c"></div>
<div class="abs" style="left:243px;top:3px;width:1px;height:20px;background:#8c8c8c"></div>
<div class="abs" style="left:326px;top:3px;width:1px;height:20px;background:#8c8c8c"></div>
<div class="abs" style="left:409px;top:3px;width:1px;height:20px;background:#8c8c8c"></div>
<div class="abs" style="left:492px;top:3px;width:1px;height:20px;background:#8c8c8c"></div>
</div>
 <div id="ed">
  <div class="l m" style="top:0">123</div>
  <div class="l m" style="top:17px">456 000</div>
  <div class="l m" style="top:34px">789</div>
  <div class="l tl" style="top:48px">~</div><div class="l tl" style="top:65px">~</div><div class="l tl" style="top:82px">~</div><div class="l tl" style="top:99px">~</div><div class="l tl" style="top:116px">~</div><div class="l tl" style="top:133px">~</div><div class="l tl" style="top:150px">~</div><div class="l tl" style="top:167px">~</div><div class="l tl" style="top:184px">~</div><div class="l tl" style="top:201px">~</div><div class="l tl" style="top:218px">~</div><div class="l tl" style="top:235px">~</div><div class="l tl" style="top:252px">~</div><div class="l tl" style="top:269px">~</div><div class="l tl" style="top:286px">~</div><div class="l tl" style="top:303px">~</div><div class="l tl" style="top:320px">~</div><div class="l tl" style="top:337px">~</div><div class="l tl" style="top:354px">~</div><div class="l tl" style="top:371px">~</div><div class="l tl" style="top:388px">~</div>
  <div class="l" style="top:408px"><span class="da">--</span> <span class="cj">插入</span> <span class="da">--</span></div>
  <div class="l m" style="top:408px;left:496.500px">2,8</div>
  <div class="l" style="top:408px;left:600px;font-weight:normal"><span class="cj">全部</span></div>
  <div style="position:absolute;left:56px;top:17px;width:2px;height:17px;background:#000"></div>
 </div>
 <div id="sb"><div class="th"></div>
  <svg style="position:absolute;left:0;top:0" width="15" height="17" viewBox="0 0 15 17"><path d="M4 11.5l3.5-3.5 3.5 3.5" fill="none" stroke="#505050" stroke-width="1.8"/></svg>
  <svg style="position:absolute;left:0;top:392px" width="15" height="17" viewBox="0 0 15 17"><path d="M4 6l3.5 3.5 3.5-3.5" fill="none" stroke="#505050" stroke-width="1.8"/></svg>
 </div>
</div>
<svg class="abs" style="left:0;top:0;pointer-events:none" width="1024" height="728" viewBox="0 0 1024 728" fill="none" stroke="#ff1500">
 <rect x="257.800" y="205.500" width="40.400" height="30.500" rx="2.600" stroke-width="2.500"/>
 <rect x="210.300" y="596" width="114.300" height="34.900" rx="3" stroke-width="2.800"/>
</svg>
<div id="task">
 <svg style="left:16px;top:12px" width="16" height="16" viewBox="0 0 16 16" fill="#fff"><path d="M0 2.300 L6.600 1.400 V7.600 H0 Z M7.400 1.300 L16 0 V7.600 H7.400 Z M0 8.400 H6.600 V14.600 L0 13.700 Z M7.400 8.400 H16 V16 L7.400 14.700 Z"/></svg>
 <div id="search">
  <svg style="left:11px;top:10px" width="20" height="20" viewBox="0 0 20 20" fill="none" stroke="#1e1e1e" stroke-width="1.300"><circle cx="11.800" cy="7.300" r="5.300"/><path d="M8 11.200 L1 18.200"/></svg>
  <div class="tx">在此键入进行搜索</div>
 </div>
 <svg style="left:383px;top:11px" width="18" height="18" viewBox="0 0 18 18"><circle cx="9" cy="9" r="6.700" fill="none" stroke="#fff" stroke-width="1.900"/></svg>
 <svg style="left:431px;top:11px" width="18" height="17" viewBox="0 0 18 17" fill="none" stroke="#fff" stroke-width="1" shape-rendering="crispEdges"><path d="M1.500 1 V3.500 H11.500 V1 M1.500 16 V13.500 H11.500 V16"/><rect x="1.500" y="5.500" width="10" height="6"/><path d="M15.500 1 V4 M15.500 8 V16"/><rect x="14" y="4" width="3" height="3.500" fill="#fff" stroke="none"/></svg>
 <svg style="left:479px;top:8px" width="24" height="24"><use href="#edge" width="24" height="24"/></svg>
 <svg style="left:528px;top:18px;top:10px" width="24" height="20" viewBox="0 0 24 20"><path d="M1 1.500 H9 L10.500 3.500 H23 V18.500 H1 Z" fill="#f0b429"/><path d="M1 4.500 H23 V18.500 H1 Z" fill="#fcd462"/><path d="M1 1.500 H9 L10 3 H1 Z" fill="#e8a317"/><path d="M5 18.500 V12 H19 V18.500 H15.500 V15 H8.500 V18.500 Z" fill="#3a96dd"/><path d="M5 12 H19 V13.500 H5 Z" fill="#5ab0ee"/></svg>
 <div class="abs" style="left:520px;top:38px;width:32px;height:2px;background:#76b9ed"></div>
 <div class="abs" style="left:552px;top:38px;width:8px;height:2px;background:#4f86b8"></div>
 <div class="abs" style="left:565px;top:0;width:48px;height:40px;background:#343f49"></div>
 <div class="abs" style="left:565px;top:38px;width:48px;height:2px;background:#76b9ed"></div>
 <svg style="left:577px;top:8px" width="24" height="24"><use href="#vim" width="24" height="24"/></svg>
 <svg style="left:834px;top:15px" width="14" height="9" viewBox="0 0 14 9" fill="none" stroke="#fff" stroke-width="1.200"><path d="M1 8 L7 2 L13 8"/></svg>
 <svg style="left:858px;top:16px" width="16" height="10" viewBox="0 0 16 10" shape-rendering="crispEdges"><rect x=".5" y=".5" width="13" height="8" fill="none" stroke="#fff"/><rect x="14" y="3" width="1.500" height="3" fill="#fff"/><rect x="2" y="2" width="3" height="5" fill="#fff"/></svg>
 <svg style="left:881px;top:14px" width="17" height="14" viewBox="0 0 17 14" fill="none" stroke="#fff" stroke-width="1" shape-rendering="crispEdges"><path d="M4.500 .5 H15.500 V9.500 H4.500 M10 9.500 V12.500 M6 12.500 H13"/><rect x=".5" y=".5" width="4" height="4"/><path d="M2.500 4.500 V13.500"/></svg>
 <svg style="left:904px;top:13px" width="18" height="16" viewBox="0 0 18 16" fill="none" stroke="#fff" stroke-width="1.100"><path d="M1 5.500 H3.500 L7 2 V14 L3.500 10.500 H1 Z"/><path d="M9.500 5.500 Q11 8 9.500 10.500 M11.800 3.800 Q14.300 8 11.800 12.200 M14.200 2 Q17.600 8 14.200 14"/></svg>
 <svg style="left:928px;top:11px" width="19" height="19" viewBox="0 0 19 19" fill="none" stroke="#fff" stroke-width="1.100"><path d="M1.500 3.500 L15.500 1.500 V10 M1.500 3.500 V14.500 L8 15.500"/><path d="M5.500 8.500 A3.200 3.200 0 0 1 11 6.500 M11 4.500 V6.800 H8.800 M11.500 9.500 A3.200 3.200 0 0 1 6 11.500 M6 13.300 V11.200 H8.200"/><circle cx="13.500" cy="13.500" r="3.600" fill="#e81123" stroke="none"/></svg>
 <div class="abs" style="left:952px;top:12px;width:16px;height:18px;color:#fff;font-size:15px;line-height:18px;text-align:center">英</div>
 <svg style="left:983px;top:12px" width="17" height="16" viewBox="0 0 17 16"><path d="M0 0 H16 V12 H6 L6 12 L3 15.500 V12 H0 Z" fill="#fff"/><path d="M3 3.500 H13 M3 6 H13 M3 8.500 H13" stroke="#02101d" stroke-width="1"/></svg>
 <svg style="left:990px;top:19px" width="18" height="18" viewBox="0 0 18 18"><circle cx="9" cy="9" r="8" fill="#2b2b2b" stroke="#7a7a7a" stroke-width="1"/><text x="9" y="13.200" text-anchor="middle" font-family="Liberation Sans,sans-serif" font-weight="bold" font-size="11.500" fill="#fff">2</text></svg>
 <div class="abs" style="left:1019px;top:0;width:1px;height:40px;background:#7a8088"></div>
 <svg style="left:815px;top:29px" width="14" height="12" viewBox="0 0 14 12"><path d="M.5 .5 V18 L4.500 14 H12 Z" fill="#fff" stroke="#000" stroke-width=".8"/></svg>
</div>
</body>
</html>
